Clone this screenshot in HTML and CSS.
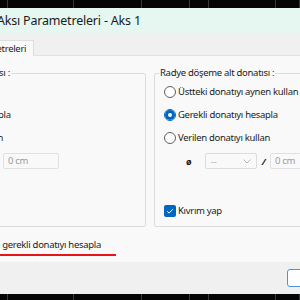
FILE: index.html
```html
<!DOCTYPE html>
<html>
<head>
    <meta charset="utf-8">
    <title>Radye Aksı Parametreleri - Aks 1</title>
    <link rel="stylesheet" href="styles.css">
</head>
<body>
    <div class="desk">
        <span></span><span></span><span></span><span></span><span></span><span></span><span></span>
    </div>

    <div class="dialog">
        <div class="titlebar">
            <span class="title">Radye Aksı Parametreleri - Aks 1</span>
        </div>

        <div class="tabs">
            <div class="tab">Parametreleri</div>
        </div>

        <div class="panel">
            <div class="groups">
                <fieldset class="group">
                    <legend>Radye döşeme üst donatısı :</legend>
                    <div class="option"><span class="radio"></span>Donatı koyma</div>
                    <div class="option"><span class="radio on"></span>Gerekli donatıyı hesapla</div>
                    <div class="option"><span class="radio"></span>Verilen donatıyı kullan</div>
                    <div class="bar-row">
                        <span class="dia">ø</span>
                        <span class="combo">--
                            <svg width="8" height="5" viewBox="0 0 8 5"><path d="M0.5 0.5 L4 4 L7.5 0.5" fill="none" stroke="#b5b5b5" stroke-width="1"/></svg>
                        </span>
                        <span class="slash">/</span>
                        <span class="field">0 cm</span>
                    </div>
                    <div class="option check-row"><span class="check off"></span>Kıvrım yap</div>
                </fieldset>

                <fieldset class="group">
                    <legend>Radye döşeme alt donatısı :</legend>
                    <div class="option"><span class="radio"></span>Üstteki donatıyı aynen kullan</div>
                    <div class="option"><span class="radio on"></span>Gerekli donatıyı hesapla</div>
                    <div class="option"><span class="radio"></span>Verilen donatıyı kullan</div>
                    <div class="bar-row">
                        <span class="dia">ø</span>
                        <span class="combo">--
                            <svg width="8" height="5" viewBox="0 0 8 5"><path d="M0.5 0.5 L4 4 L7.5 0.5" fill="none" stroke="#b5b5b5" stroke-width="1"/></svg>
                        </span>
                        <span class="slash">/</span>
                        <span class="field">0 cm</span>
                    </div>
                    <div class="option check-row">
                        <span class="check">
                            <svg width="12" height="12" viewBox="0 0 12 12"><path d="M3.2 6.3 L5.1 8.1 L8.9 4.2" fill="none" stroke="#fff" stroke-width="1"/></svg>
                        </span>Kıvrım yap
                    </div>
                </fieldset>
            </div>

            <div class="extra">
                <span class="check off"></span>Kirişlerin altında gerekli donatıyı hesapla
            </div>
            <div class="mark"></div>
        </div>

        <div class="footer">
            <button type="button" class="btn">Tamam</button>
        </div>
    </div>

    <div class="desk bottom">
        <span></span><span></span><span></span><span></span><span></span><span></span><span></span>
    </div>
</body>
</html>
```

FILE: styles.css
```css
* {
    box-sizing: border-box;
}

body {
    margin: 0;
    width: 300px;
    height: 300px;
    overflow: hidden;
    background: #000;
    font-family: "Noto Sans", "Open Sans", sans-serif;
    font-size: 9.5px;
    letter-spacing: -0.3px;
    color: #1b1b1b;
}

.desk {
    display: grid;
    grid-template-columns: 8px 66px 68px 48px 19px 67px 1fr;
    height: 8px;
    background: #050505;
}

.desk span {
    border-right: 1px solid #3a3a3a;
}

.desk.bottom {
    height: 6px;
}

.dialog {
    margin-left: -121px;
    width: 560px;
}

.titlebar {
    height: 25px;
    display: flex;
    align-items: center;
    padding-left: 80px;
    background: #e6f7f2;
    font-size: 12.5px;
    letter-spacing: -0.2px;
}

.tabs {
    height: 22px;
    display: flex;
    align-items: flex-end;
    padding-left: 82px;
    background: #f0f0f0;
}

.tab {
    height: 16px;
    line-height: 15px;
    padding: 0 7px;
    margin-bottom: -1px;
    background: #f9f9f9;
    border: 1px solid #dedede;
    border-bottom: none;
    position: relative;
}

.panel {
    height: 207px;
    padding: 10px 8px 0;
    background: #f9f9f9;
    border-top: 1px solid #e2e2e2;
}

.groups {
    display: flex;
    gap: 8px;
}

.group {
    width: 259px;
    min-width: 0;
    margin: 0;
    padding: 0 9px 4px;
    border: 1px solid #dcdcdc;
    border-radius: 2px;
}

.group legend {
    margin-left: -5px;
    padding: 0 1px;
    line-height: 14px;
}

.option {
    display: flex;
    align-items: center;
    gap: 2px;
    height: 23px;
}

.radio {
    width: 12px;
    height: 12px;
    border: 1px solid #606060;
    border-radius: 50%;
    background: #fff;
}

.radio.on {
    border-color: #0067c0;
    box-shadow: inset 0 0 0 3px #0067c0;
}

.bar-row {
    display: flex;
    align-items: center;
    height: 24px;
    padding-left: 22px;
}

.dia {
    width: 19px;
    font-weight: bold;
    font-size: 9px;
}

.combo {
    width: 52px;
    height: 16px;
    display: flex;
    align-items: center;
    justify-content: space-between;
    padding: 0 5px;
    border: 1px solid #dcdcdc;
    border-radius: 2px;
    color: #b0b0b0;
}

.slash {
    width: 13px;
    text-align: center;
    font-style: italic;
    font-weight: bold;
}

.field {
    width: 56px;
    height: 16px;
    line-height: 14px;
    padding-left: 4px;
    border: 1px solid #e0e0e0;
    border-radius: 2px;
    color: #9a9a9a;
}

.check-row {
    margin-top: 26px;
}

.check {
    width: 12px;
    height: 12px;
    border-radius: 2px;
    background: #0067c0;
}

.check svg {
    display: block;
}

.check.off {
    background: #fff;
    border: 1px solid #606060;
}

.extra {
    display: flex;
    align-items: center;
    gap: 4px;
    height: 14px;
    margin-top: 10px;
    margin-left: 30px;
}

.mark {
    width: 116px;
    height: 2px;
    margin: 3px 0 0 113px;
    background: #e8141c;
}

.footer {
    height: 32px;
    padding: 7px 0 0 408px;
    background: #f0f0f0;
}

.btn {
    width: 75px;
    height: 18px;
    padding: 0;
    background: #fff;
    border: 1px solid #4a94dc;
    border-radius: 3px;
    font: inherit;
    color: #1b1b1b;
}
```
